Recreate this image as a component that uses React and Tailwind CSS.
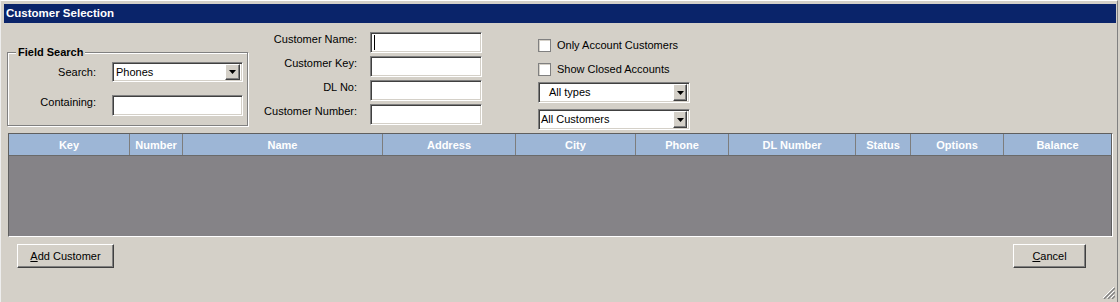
import React from "react";

const sunken =
  "border border-t-[#808080] border-l-[#808080] border-b-white border-r-white shadow-[inset_1px_1px_0_#404040,inset_-1px_-1px_0_#d4d0c8] bg-white";
const raised =
  "border border-t-white border-l-white border-r-[#404040] border-b-[#404040] shadow-[inset_-1px_-1px_0_#808080] bg-[#d4d0c8]";

function DropBtn({ className }) {
  return (
    <div className={`${raised} ${className} flex items-center justify-center`}>
      <svg width="7" height="4" viewBox="0 0 7 4">
        <path d="M0 0H7L3.5 4Z" fill="#000" />
      </svg>
    </div>
  );
}

function Select({ value, className, btnClass, textClass }) {
  return (
    <div className={`${sunken} ${className} flex items-center justify-between`}>
      <span className={`${textClass} leading-none`}>{value}</span>
      <DropBtn className={btnClass} />
    </div>
  );
}

function Check({ label }) {
  return (
    <div className="flex items-center h-[13px]">
      <div className="w-[13px] h-[13px] border border-[#808080] bg-white shadow-[inset_1px_1px_0_#d4d0c8]" />
      <span className="ml-[6px] leading-none">{label}</span>
    </div>
  );
}

const cols = [
  ["Key", "w-[121px]"],
  ["Number", "w-[53px]"],
  ["Name", "w-[200px]"],
  ["Address", "w-[133px]"],
  ["City", "w-[120px]"],
  ["Phone", "w-[93px]"],
  ["DL Number", "w-[127px]"],
  ["Status", "w-[55px]"],
  ["Options", "w-[93px]"],
  ["Balance", "w-[108px]"],
];

export default function App() {
  return (
    <div className="w-[1120px] h-[302px] bg-[#d4d0c8] overflow-hidden relative font-['Liberation_Sans',Arial,sans-serif] text-[11px] text-black">
      <div className="w-[1118px] h-[302px] border-t border-l border-t-white border-l-[#eeeeee] border-r border-r-[#808080] pt-[3px] pl-[3px] flex flex-col">
        {/* title */}
        <div className="h-[19px] w-[1112px] bg-[#0a246a] text-white font-bold text-[11.5px] flex items-center pl-[2px] pt-[1px]">
          Customer Selection
        </div>

        {/* top area */}
        <div className="h-[110px] flex items-start">
          {/* field search */}
          <fieldset className="ml-[3px] mt-[23px] w-[241px] h-[80px] border border-[#808080] shadow-[inset_1px_1px_0_#fff,1px_1px_0_#fff] p-0 m-0">
            <legend className="ml-[8px] px-[2px] font-bold leading-[13px] bg-[#d4d0c8]">
              Field Search
            </legend>
            <div className="grid grid-cols-[88px_131px] gap-x-[16px] mt-[3px] items-center">
              <div className="text-right">Search:</div>
              <Select
                value="Phones"
                className="h-[20px] pr-[2px]"
                btnClass="w-[15px] h-[16px]"
                textClass="pl-[3px]"
              />
              <div className="text-right self-start mt-[14px] leading-[13px]">Containing:</div>
              <div className={`${sunken} h-[21px] mt-[13px]`} />
            </div>
          </fieldset>

          {/* middle column */}
          <div className="ml-[9px] mt-[9px] grid grid-cols-[100px_112px] gap-x-[13px] gap-y-[3px] items-start">
            <div className="text-right pt-[1px] leading-[13px]">Customer Name:</div>
            <div className={`${sunken} h-[21px] flex items-center pl-[3px]`}>
              <div className="w-px h-[15px] bg-black" />
            </div>
            <div className="text-right pt-[1px] leading-[13px]">Customer Key:</div>
            <div className={`${sunken} h-[21px]`} />
            <div className="text-right pt-[1px] leading-[13px]">DL No:</div>
            <div className={`${sunken} h-[21px]`} />
            <div className="text-right pt-[1px] leading-[13px]">Customer Number:</div>
            <div className={`${sunken} h-[21px]`} />
          </div>

          {/* right column */}
          <div className="ml-[56px] mt-[16px] flex flex-col w-[152px]">
            <Check label="Only Account Customers" />
            <div className="mt-[11px]">
              <Check label="Show Closed Accounts" />
            </div>
            <Select
              value="All types"
              className="h-[21px] mt-[6px] pr-[2px]"
              btnClass="w-[14px] h-[17px]"
              textClass="pl-[10px]"
            />
            <Select
              value="All Customers"
              className="h-[21px] mt-[6px] pr-[2px]"
              btnClass="w-[14px] h-[17px]"
              textClass="pl-[2px]"
            />
          </div>
        </div>

        {/* grid */}
        <div className="ml-[4px] w-[1105px] h-[104px] border border-t-[#5f5f5f] border-l-[#5f5f5f] border-r-white border-b-white flex flex-col">
          <div className="h-[22px] flex bg-[#9db6d6] border-b border-b-[#6a6a6a] text-white font-bold">
            {cols.map(([name, w], i) => (
              <div
                key={name}
                className={`${w} h-full flex items-center justify-center pt-[2px] ${
                  i < cols.length - 1 ? "border-r border-r-[#7d7d7d]" : "border-r border-r-[#5f5f5f]"
                }`}
              >
                {name}
              </div>
            ))}
          </div>
          <div className="flex-1 bg-[#858387] border-r border-r-[#5f5f5f]" />
        </div>

        {/* buttons */}
        <div className="mt-[7px] flex items-start">
          <button className={`${raised} ml-[13px] w-[97px] h-[24px] flex items-center justify-center`}>
            <span>
              <span className="underline">A</span>dd Customer
            </span>
          </button>
          <button className={`${raised} ml-[899px] w-[73px] h-[24px] flex items-center justify-center`}>
            <span>
              <span className="underline">C</span>ancel
            </span>
          </button>
        </div>
      </div>

      {/* resize grip */}
      <svg className="absolute right-[5px] bottom-[3px]" width="13" height="13" viewBox="0 0 13 13">
        <path d="M12 1L1 12M12 5L5 12M12 9L9 12" stroke="#fff" strokeWidth="1" />
        <path d="M13 2L2 13M13 6L6 13M13 10L10 13" stroke="#808080" strokeWidth="1.4" />
      </svg>
    </div>
  );
}
